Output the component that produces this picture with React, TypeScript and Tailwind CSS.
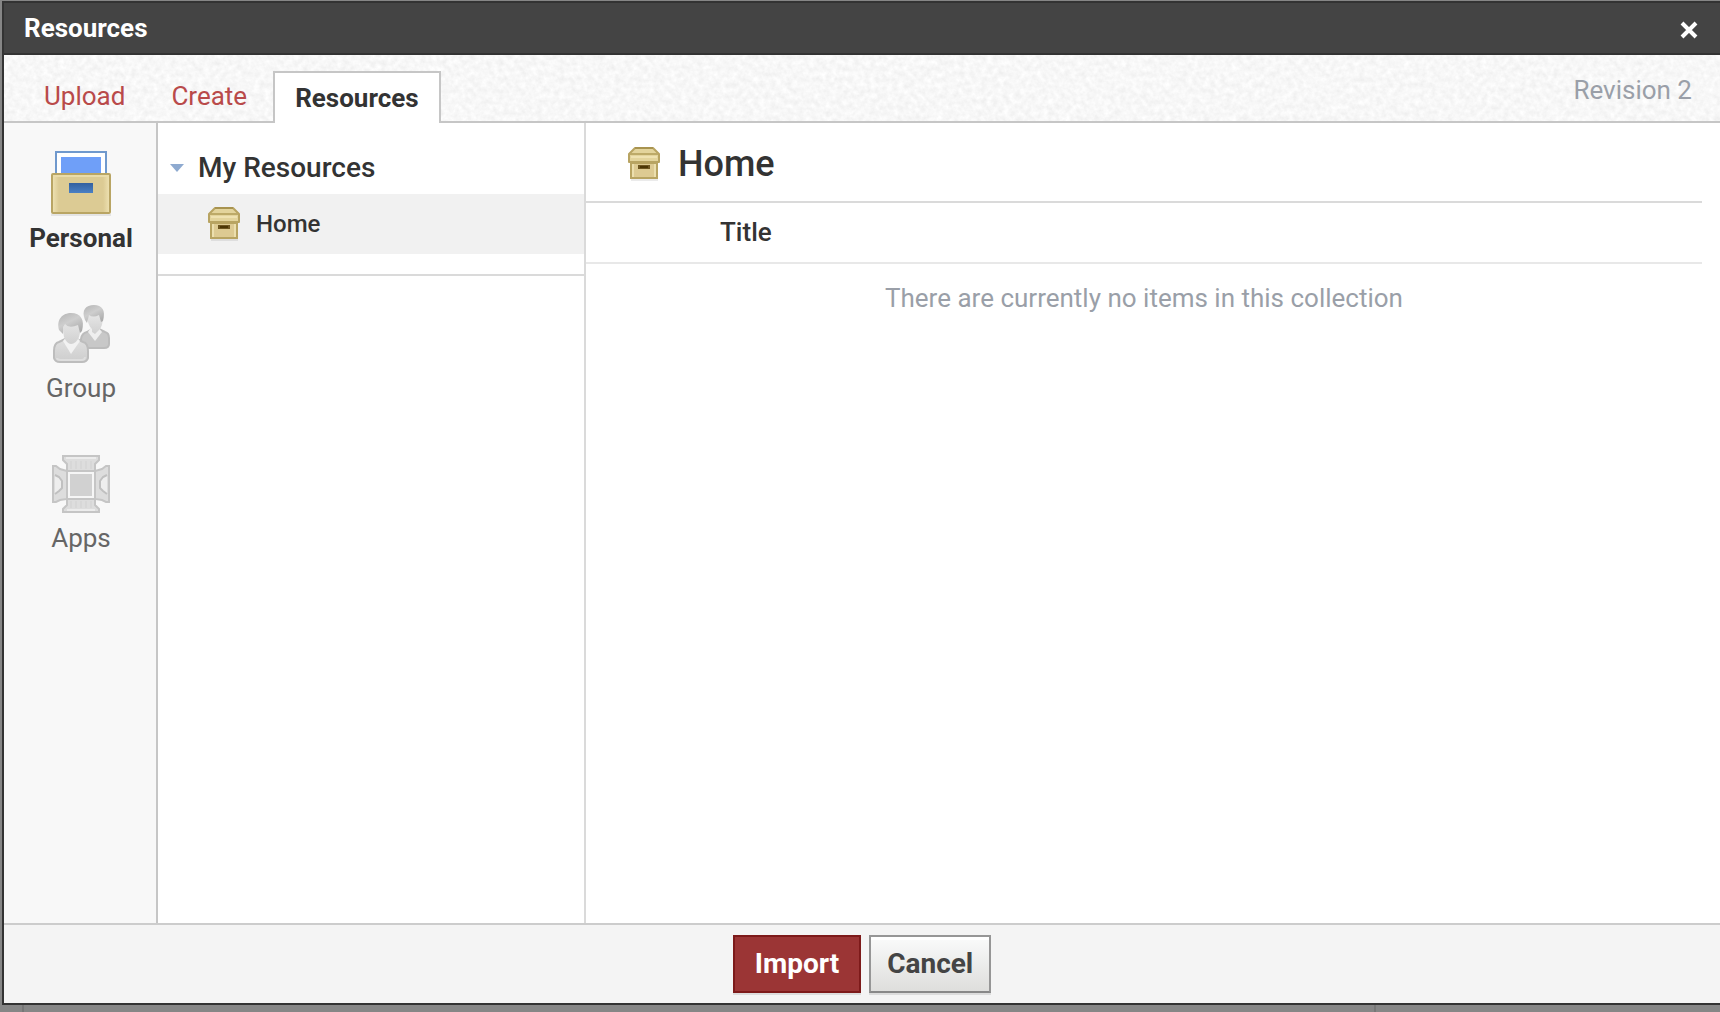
import React from "react";

function PaperTexture() {
  return (
    <svg className="pointer-events-none absolute inset-0 h-full w-full" aria-hidden="true">
      <filter id="paper" x="0" y="0" width="100%" height="100%" colorInterpolationFilters="sRGB">
        <feTurbulence type="fractalNoise" baseFrequency="0.18" numOctaves="3" seed="7" />
        <feColorMatrix
          type="matrix"
          values="0.09 0 0 0 0.925  0.09 0 0 0 0.925  0.09 0 0 0 0.925  0 0 0 0 1"
        />
      </filter>
      <rect width="100%" height="100%" filter="url(#paper)" />
    </svg>
  );
}

function PersonalIcon() {
  return (
    <svg width="64" height="66" viewBox="0 0 64 66" aria-hidden="true">
      <defs>
        <linearGradient id="slot" x1="0" y1="0" x2="0" y2="1">
          <stop offset="0" stopColor="#34619f" />
          <stop offset="1" stopColor="#4a80c4" />
        </linearGradient>
        <linearGradient id="drawer" x1="0" y1="0" x2="1" y2="0">
          <stop offset="0" stopColor="#efe3b4" />
          <stop offset="0.12" stopColor="#dccb94" />
          <stop offset="0.88" stopColor="#dccb94" />
          <stop offset="1" stopColor="#efe3b4" />
        </linearGradient>
      </defs>
      <rect x="7" y="2" width="50" height="30" fill="#fff" stroke="#7099cd" strokeWidth="2" />
      <rect x="12" y="7" width="40" height="18" fill="#6f9ff8" />
      <rect x="2" y="64" width="60" height="2" fill="#000" opacity="0.08" />
      <rect x="3" y="24" width="58" height="39" rx="1" fill="url(#drawer)" stroke="#b9a564" strokeWidth="2" />
      <path d="M4 26H60" stroke="#eadcaa" strokeWidth="2" />
      <rect x="20" y="33" width="24" height="10" fill="url(#slot)" />
    </svg>
  );
}

function GroupIcon() {
  return (
    <svg width="64" height="66" viewBox="0 -1 64 66" aria-hidden="true">
      <defs>
        <linearGradient id="hair" x1="0" y1="0" x2="0.6" y2="1">
          <stop offset="0" stopColor="#b4b4b4" />
          <stop offset="0.5" stopColor="#cecece" />
          <stop offset="1" stopColor="#adadad" />
        </linearGradient>
        <linearGradient id="face" x1="0" y1="0" x2="0" y2="1">
          <stop offset="0" stopColor="#e9e9e9" />
          <stop offset="1" stopColor="#d0d0d0" />
        </linearGradient>
        <linearGradient id="shirt" x1="0" y1="0" x2="0" y2="1">
          <stop offset="0" stopColor="#e0e0e0" />
          <stop offset="1" stopColor="#cdcdcd" />
        </linearGradient>
      </defs>
      <path d="M32 45V38Q33 32 38 31L43 28H50L56 31Q60 32 60 37V43Q60 47 55 47H34Z" fill="#c8c8c8" stroke="#bcbcbc" strokeWidth="2" />
      <path d="M39 31L46 40L53 31L49 26H42Z" fill="#eeeeee" />
      <path d="M38 15Q39 25 43 28V31L46 33L50 29Q54 25 54 15L47 11Z" fill="url(#face)" />
      <path d="M36 19C32 9 37 4 45 4C53 4 57 9 54 20L52 21L50 14Q44 17 40 14L38 22Z" fill="url(#hair)" />
      <path d="M5 57V50Q5 42 10 41L16 38H28L34 41Q39 42 39 50V57Q38 61 33 61H11Q6 61 5 57Z" fill="url(#shirt)" stroke="#bdbdbd" strokeWidth="2" />
      <path d="M14 40L22 53L31 40L27 35H18Z" fill="#f2f2f2" />
      <path d="M8 57Q8 59 12 59H32Q36 59 36 56" fill="none" stroke="#dedede" strokeWidth="2" />
      <path d="M13 24L15 36Q18 43 22 43Q27 43 30 36L33 24L22 18Z" fill="url(#face)" />
      <path d="M10 29C7 18 14 12 22 12C32 12 36 19 33 30L31 32L29 24Q20 28 16 23L14 26V33Z" fill="url(#hair)" />
    </svg>
  );
}

function AppsIcon() {
  return (
    <svg width="64" height="66" viewBox="0 -2 64 66" aria-hidden="true">
      <g fill="#dddddd" stroke="#c5c5c5" strokeWidth="2" strokeLinejoin="miter">
        <path d="M14 4H50V8L46 12V19H18V12L14 8Z" />
        <path d="M18 47H46V53L50 57V60H14V57L18 53Z" />
        <path d="M4 14H7L11 17L18 19V47L11 48L7 50H4Z" />
        <path d="M60 14H57L53 17L46 19V47L53 48L57 50H60Z" />
      </g>
      <path d="M17 6H47M18 58H46" stroke="#ececec" strokeWidth="2" />
      <path d="M22 9V17M27 9V17M32 9V17M37 9V17M42 9V17M22 49V56M27 49V56M32 49V56M37 49V56M42 49V56" stroke="#d7d7d7" strokeWidth="2" />
      <path d="M6 23L10 25L13 29V36L10 39L6 42M58 23L54 25L51 29V36L54 39L58 42" fill="#eeeeee" stroke="#c0c0c0" strokeWidth="2" />
      <rect x="18" y="19" width="28" height="28" fill="#f6f6f6" stroke="#c5c5c5" strokeWidth="2" />
      <rect x="21" y="22" width="22" height="22" fill="#d1d1d1" />
    </svg>
  );
}

function BoxIcon() {
  return (
    <svg className="shrink-0" width="32" height="34" viewBox="0 0 32 34" aria-hidden="true">
      <rect x="3" y="32" width="27" height="2" fill="#000" opacity="0.08" />
      <path d="M7 1H25L31 7V15H1V7Z" fill="#e3d49c" stroke="#b8a462" strokeWidth="2" strokeLinejoin="round" />
      <path d="M7 1H25" stroke="#a8934f" strokeWidth="2" />
      <path d="M2 7H30" stroke="#bdaa68" strokeWidth="2" />
      <rect x="3" y="9" width="26" height="2" fill="#efe2b1" />
      <rect x="3" y="16" width="26" height="15" fill="#ddca92" stroke="#b8a462" strokeWidth="2" />
      <rect x="4" y="17" width="2" height="13" fill="#ecdfae" />
      <rect x="26" y="17" width="2" height="13" fill="#ecdfae" />
      <rect x="10" y="18" width="12" height="4" fill="#6d5620" />
      <rect x="12" y="19" width="8" height="2" fill="#4b3606" />
    </svg>
  );
}

const sections = [
  { label: "Personal", icon: PersonalIcon, active: true },
  { label: "Group", icon: GroupIcon, active: false },
  { label: "Apps", icon: AppsIcon, active: false },
];

export default function App() {
  return (
    <div className="flex min-h-screen flex-col bg-[#868686] pt-px pl-[2px] font-['Roboto',sans-serif] text-[26px] leading-[30px] text-[#333]">
      <div role="dialog" aria-label="Resources" className="flex grow flex-col border-y-2 border-l-2 border-[#333] bg-white">
        <header className="flex h-[52px] items-center justify-between border-b-2 border-[#333] bg-[#444] pr-[21px] pl-5 text-white">
          <h1 className="font-bold">Resources</h1>
          <button type="button" aria-label="Close" className="mt-1">
            <svg width="20" height="20" viewBox="0 0 20 20" aria-hidden="true">
              <path d="M3 3L17 17M17 3L3 17" stroke="#fff" strokeWidth="4" />
            </svg>
          </button>
        </header>

        <nav className="relative flex h-[68px] items-end justify-between bg-[#f7f7f7]">
          <PaperTexture />
          <div className="absolute inset-x-0 bottom-0 h-[2px] bg-[#c6c6c6]" />
          <div className="relative flex items-end gap-[6px] pl-5">
            <a href="#upload" className="mb-3 px-5 text-[#b94a4a]">Upload</a>
            <a href="#create" className="mb-3 px-5 text-[#b94a4a]">Create</a>
            <a href="#resources" aria-current="page" className="flex h-[52px] items-center border-2 border-b-0 border-[#c6c6c6] bg-white px-5 font-bold">
              Resources
            </a>
          </div>
          <span className="relative mr-7 mb-[18px] text-[#9a9fa8]">Revision 2</span>
        </nav>

        <div className="flex grow">
          <aside className="w-[154px] shrink-0 border-r-2 border-[#c6c6c6] bg-[#f8f8f8] pt-[27px] pl-[2px]">
            {sections.map(({ label, icon: Icon, active }) => (
              <button
                key={label}
                type="button"
                className={
                  active
                    ? "flex h-[150px] w-full flex-col items-center gap-[7px] font-bold"
                    : "flex h-[150px] w-full flex-col items-center gap-[7px] text-[#666]"
                }
              >
                <Icon />
                <span>{label}</span>
              </button>
            ))}
          </aside>

          <section className="w-[428px] shrink-0 border-r-2 border-[#dadada]">
            <div className="border-b-2 border-[#dadada] pt-[18px] pb-5">
              <button type="button" aria-expanded="true" className="flex h-[53px] w-full items-center gap-[14px] pl-3 text-[28px] font-medium">
                <svg width="14" height="8" viewBox="0 0 14 8" aria-hidden="true">
                  <path d="M0 0H14L7 8Z" fill="#8eaad0" />
                </svg>
                My Resources
              </button>
              <button type="button" className="flex h-[60px] w-full items-center gap-4 bg-[#f1f1f1] pl-[50px] text-[24px] font-medium">
                <BoxIcon />
                Home
              </button>
            </div>
          </section>

          <main className="grow pr-[18px]">
            <div className="flex h-20 items-center gap-[18px] border-b-2 border-[#dadada] pt-1 pl-[42px]">
              <BoxIcon />
              <h2 className="text-[36px] leading-[42px] font-medium">Home</h2>
            </div>
            <table className="w-full">
              <thead>
                <tr className="h-[60px] border-b-2 border-[#e8e8e8]">
                  <th scope="col" className="pb-[2px] pl-[134px] text-left font-medium">Title</th>
                </tr>
              </thead>
              <tbody>
                <tr>
                  <td className="pt-[19px] text-center text-[#9a9fa8]">There are currently no items in this collection</td>
                </tr>
              </tbody>
            </table>
          </main>
        </div>

        <footer className="flex h-20 items-start justify-center gap-2 border-t-2 border-[#ccc] bg-[#f4f4f4] pt-[10px] text-[28px] font-bold">
          <button type="button" className="h-[58px] border-2 border-[#7d1a1a] bg-[#9b3535] px-5 text-white shadow-[0_2px_0_#dcdcdc]">
            Import
          </button>
          <button type="button" className="h-[58px] border-2 border-[#969696] border-b-[#888] bg-linear-to-b from-[#fafbfb] to-[#dededc] px-4 text-[#444] shadow-[0_2px_0_#dcdcdc,inset_0_3px_0_#fff]">
            Cancel
          </button>
        </footer>
      </div>
      <div className="flex h-[7px]">
        <div className="w-[22px] border-r-2 border-[#777]" />
        <div className="w-[1352px] border-r-2 border-[#777]" />
      </div>
    </div>
  );
}
